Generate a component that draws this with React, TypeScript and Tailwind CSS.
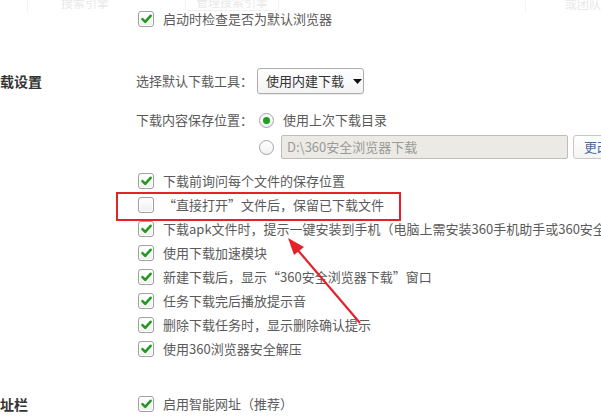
import React from 'react';

const FONT = "font-['Microsoft_YaHei','Noto_Sans_CJK_SC',sans-serif]";

function Check({ checked = true }: { checked?: boolean }) {
  return (
    <span className="flex h-[16px] w-[16px] shrink-0 items-center justify-center rounded-[3px] border border-[#9f9f9f] bg-gradient-to-b from-white to-[#efefef] shadow-[inset_0_0_0_1px_#fff]">
      {checked && (
        <svg width="11" height="10" viewBox="0 0 11 10">
          <path d="M1.5 5.2 L4.2 7.8 L9.6 1.8" fill="none" stroke="#1f9a1f" strokeWidth="2.5" strokeLinecap="round" strokeLinejoin="round" />
        </svg>
      )}
    </span>
  );
}

function Radio({ on = false }: { on?: boolean }) {
  return (
    <span className="flex h-[15px] w-[15px] shrink-0 items-center justify-center rounded-full border border-[#a3a3a3] bg-gradient-to-b from-white to-[#f1f1f1]">
      {on && <span className="h-[7px] w-[7px] rounded-full bg-[#1aa31a]" />}
    </span>
  );
}

function CheckRow({ label, checked = true }: { label: string; checked?: boolean }) {
  return (
    <div className="flex h-6 items-center pl-[138px]">
      <Check checked={checked} />
      <span className="ml-[9px] whitespace-nowrap text-[13px] text-[#5a5a5a]">{label}</span>
    </div>
  );
}

const downloadOptions: { label: string; checked: boolean }[] = [
  { label: '下载前询问每个文件的保存位置', checked: true },
  { label: '“直接打开”文件后，保留已下载文件', checked: false },
  { label: '下载apk文件时，提示一键安装到手机（电脑上需安装360手机助手或360安全卫士）', checked: true },
  { label: '使用下载加速模块', checked: true },
  { label: '新建下载后，显示“360安全浏览器下载”窗口', checked: true },
  { label: '任务下载完后播放提示音', checked: true },
  { label: '删除下载任务时，显示删除确认提示', checked: true },
  { label: '使用360浏览器安全解压', checked: true },
];

export default function App() {
  return (
    <div className={`relative h-[416px] w-[601px] overflow-hidden bg-white ${FONT}`}>
      {/* faded header of the section above */}
      <div className="pointer-events-none absolute left-0 top-0 flex h-[12px] w-full items-start text-[12px] leading-[12px] text-[#e8e8e8]">
        <span className="ml-[27px] h-[12px] w-px bg-[#f2f2f2]" />
        <span className="ml-[33px] -mt-[3px]">搜索引擎</span>
        <span className="ml-[76px] -mt-[6px] h-[17px] rounded-[3px] border border-[#f2f2f2] px-[10px] pt-[1px]">管理搜索引擎</span>
        <span className="ml-[246px] h-[12px] w-px bg-[#f4f4f4]" />
        <span className="ml-[39px] -mt-[2px]">或团队</span>
      </div>

      <div className="pt-[7px]">
        <CheckRow label="启动时检查是否为默认浏览器" />

        {/* 下载设置 */}
        <div className="mt-[37px] flex h-[26px] items-center">
          <span className="w-[136px] shrink-0 text-[14px] font-bold text-[#333]">载设置</span>
          <span className="whitespace-nowrap text-[13px] text-[#5a5a5a]">选择默认下载工具：</span>
          <div className="ml-[4px] flex h-[26px] w-[107px] items-center rounded-[3px] border border-[#adadad] bg-gradient-to-b from-white to-[#f3f3f3] pl-[8px] shadow-[0_1px_1px_rgba(0,0,0,0.08)]">
            <span className="text-[13px] text-[#333]">使用内建下载</span>
            <svg className="ml-[9px]" width="9" height="5" viewBox="0 0 9 5">
              <path d="M0 0 H9 L4.5 5 Z" fill="#111" />
            </svg>
          </div>
        </div>

        <div className="mt-[14px] flex h-6 items-center pl-[136px]">
          <span className="whitespace-nowrap text-[13px] text-[#5a5a5a]">下载内容保存位置：</span>
          <span className="ml-[6px]"><Radio on /></span>
          <span className="ml-[9px] whitespace-nowrap text-[13px] text-[#5a5a5a]">使用上次下载目录</span>
        </div>

        <div className="mt-[3px] flex h-6 items-center pl-[259px]">
          <Radio />
          <div className="ml-[7px] flex h-6 w-[287px] shrink-0 items-center rounded-[2px] border border-[#bdbdbd] bg-[#ebeae5] pl-[5px]">
            <span className="whitespace-nowrap text-[13px] text-[#9a9a9a]">D:\360安全浏览器下载</span>
          </div>
          <div className="ml-[5px] flex h-6 shrink-0 items-center rounded-[3px] border border-[#c8c8c8] bg-gradient-to-b from-white to-[#f4f4f4] px-[10px]">
            <span className="whitespace-nowrap text-[13px] text-[#4d6b9a]">更改</span>
          </div>
        </div>

        <div className="mt-[10px]">
          {downloadOptions.map((o) => (
            <CheckRow key={o.label} label={o.label} checked={o.checked} />
          ))}
        </div>

        {/* 地址栏 */}
        <div className="mt-[31px] flex h-6 items-center">
          <span className="w-[138px] shrink-0 text-[14px] font-bold text-[#333]">址栏</span>
          <Check />
          <span className="ml-[9px] whitespace-nowrap text-[13px] text-[#5a5a5a]">启用智能网址（推荐）</span>
        </div>
      </div>

      {/* annotation: red box + arrow */}
      <div className="pointer-events-none absolute left-[116px] top-[192px] h-[29px] w-[285px] border-2 border-[#e5222b]" />
      <svg className="pointer-events-none absolute left-0 top-0" width="601" height="416" viewBox="0 0 601 416">
        <line x1="360" y1="323" x2="296" y2="248" stroke="#e5222b" strokeWidth="2.2" />
        <polygon points="288,238 304,247 294,255" fill="#e5222b" />
      </svg>
    </div>
  );
}
